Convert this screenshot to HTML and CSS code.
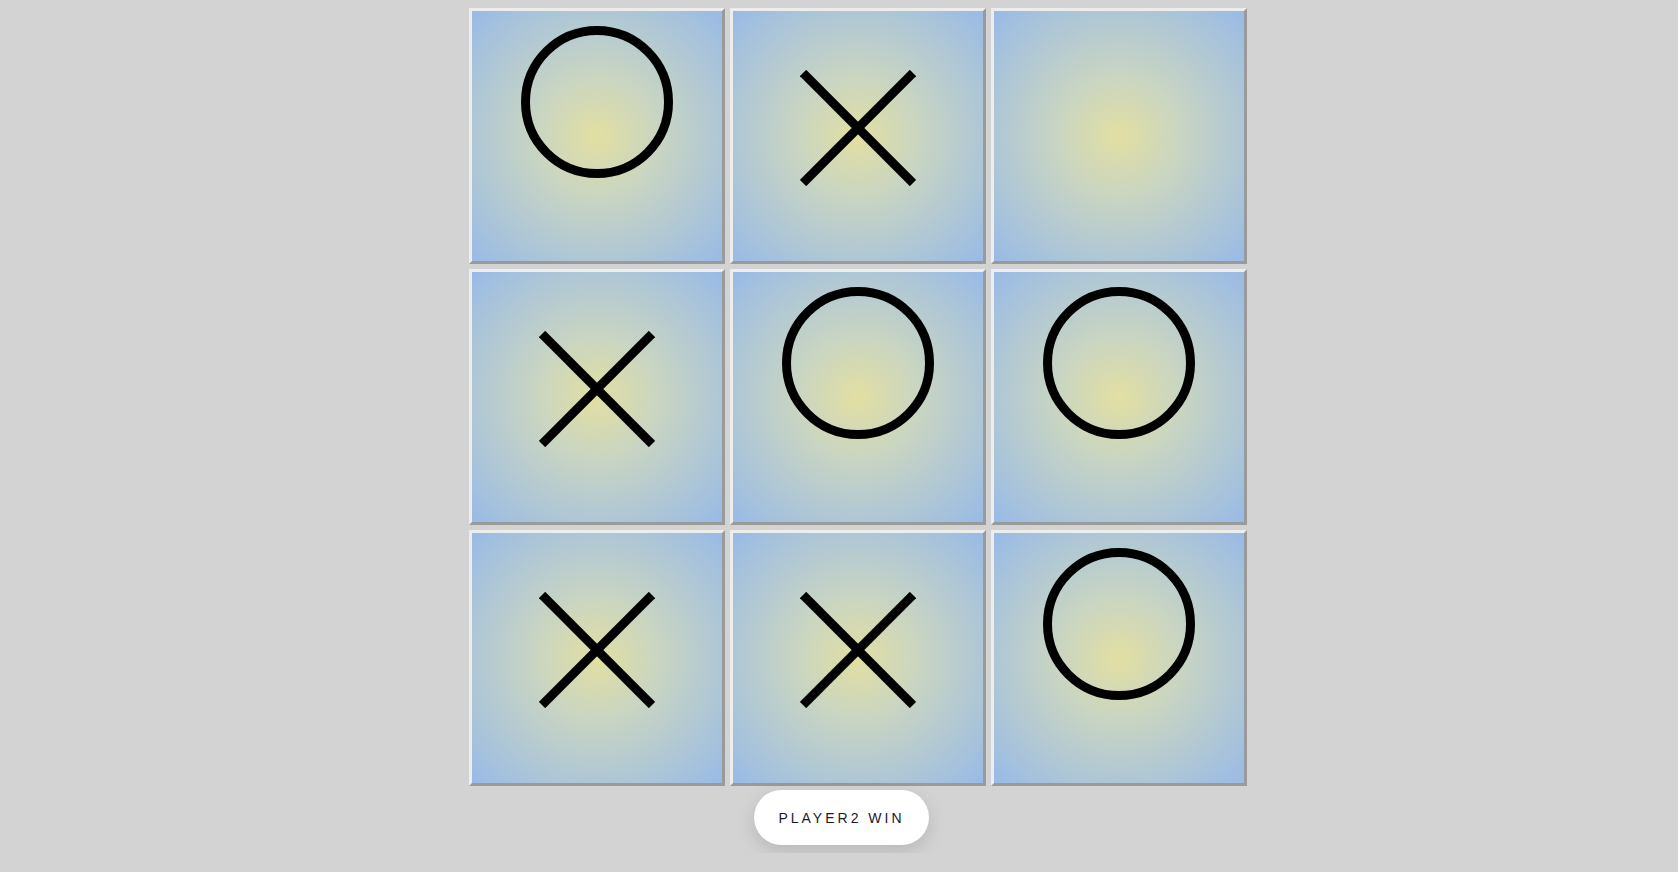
FILE: index.html
```html
<!DOCTYPE html>
<html>
<head>
<meta charset="utf-8">
<link rel="stylesheet" href="styles.css">
</head>
<body>
<div class="game">
  <div class="board">
    <div class="cell"><div class="o"></div></div>
    <div class="cell"><svg class="x" viewBox="0 0 116 116"><line x1="3" y1="3" x2="113" y2="113"/><line x1="113" y1="3" x2="3" y2="113"/></svg></div>
    <div class="cell"></div>
    <div class="cell"><svg class="x" viewBox="0 0 116 116"><line x1="3" y1="3" x2="113" y2="113"/><line x1="113" y1="3" x2="3" y2="113"/></svg></div>
    <div class="cell"><div class="o"></div></div>
    <div class="cell"><div class="o"></div></div>
    <div class="cell"><svg class="x" viewBox="0 0 116 116"><line x1="3" y1="3" x2="113" y2="113"/><line x1="113" y1="3" x2="3" y2="113"/></svg></div>
    <div class="cell"><svg class="x" viewBox="0 0 116 116"><line x1="3" y1="3" x2="113" y2="113"/><line x1="113" y1="3" x2="3" y2="113"/></svg></div>
    <div class="cell"><div class="o"></div></div>
  </div>
  <div class="status">PLAYER2 WIN</div>
</div>
</body>
</html>
```
FILE: styles.css
```css
html, body {
  margin: 0;
  padding: 0;
}
body {
  background: #d3d3d3;
  padding: 8px;
  font-family: "Liberation Sans", Arial, sans-serif;
}
.game {
  display: flex;
  flex-direction: column;
  align-items: center;
}
.board {
  display: grid;
  grid-template-columns: repeat(3, 256px);
  grid-template-rows: repeat(3, 256px);
  gap: 5px;
  margin-left: 38px;
}
.cell {
  box-sizing: border-box;
  border: 3px solid;
  border-color: #ededed #9a9a9a #9a9a9a #ededed;
  background: radial-gradient(circle farthest-corner at 50% 50%, #e2dfa2 0%, #c9d5c2 35%, #98bae6 100%);
  display: flex;
  justify-content: center;
  align-items: flex-start;
}
.o {
  box-sizing: border-box;
  width: 152px;
  height: 152px;
  margin-top: 15px;
  border: 9px solid #000;
  border-radius: 50%;
}
.x {
  width: 116px;
  height: 116px;
  margin-top: 59px;
  display: block;
}
.x line {
  stroke: #000;
  stroke-width: 9;
}
.status {
  box-sizing: border-box;
  width: 175px;
  height: 55px;
  margin-top: 4px;
  margin-left: 5px;
  background: #fff;
  border-radius: 28px;
  box-shadow: 0 6px 18px rgba(0, 0, 0, 0.13);
  display: flex;
  align-items: center;
  justify-content: center;
  font-size: 14px;
  letter-spacing: 3px;
  color: #1a1a2a;
}
```
